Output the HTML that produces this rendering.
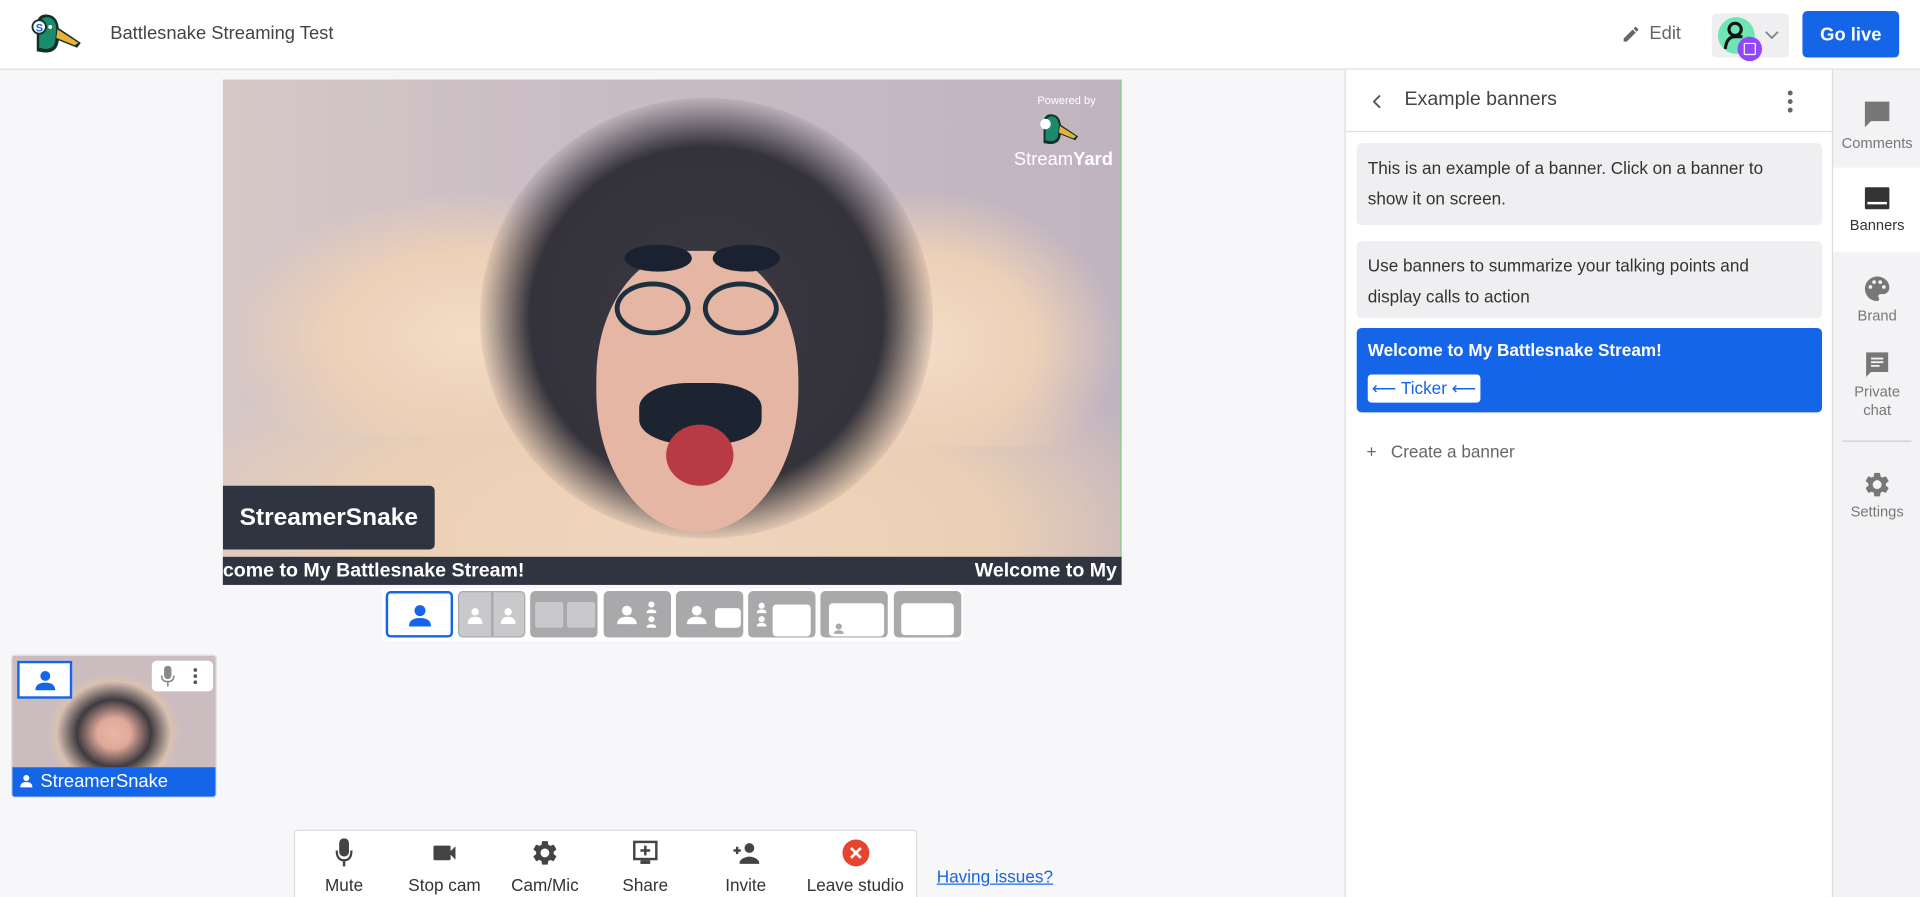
<!DOCTYPE html>
<html><head><meta charset="utf-8">
<style>
*{box-sizing:border-box;margin:0;padding:0}
html,body{width:1920px;height:897px;overflow:hidden;background:#f7f7f9;font-family:"Liberation Sans",sans-serif}
#s{width:1568px;height:733px;transform:scale(1.22449,1.2237);transform-origin:0 0;position:relative;background:#f7f7f9;color:#333}
.a{position:absolute}
.hdr{left:0;top:0;width:1568px;height:57px;background:#fff;border-bottom:1px solid #ddd}
.btn{display:flex;align-items:center;justify-content:center}
.card{background:#efeff1;border-radius:4px;font-size:14px;line-height:25px;color:#333;padding:8px 36px 8px 9px}
.lb{position:absolute;top:2px;width:55px;height:38px;border-radius:4px;background:#a9a9ab}
.sb{position:absolute;left:0;width:72px;text-align:center;font-size:12px;color:#777}
.ctl{position:absolute;top:6px;width:80px;text-align:center;font-size:14px;color:#333}
.ctl svg{display:block;margin:0 auto 6px}
</style></head><body>
<div id="s">
<div class="a hdr">
  <svg class="a" style="left:22px;top:10px" width="46" height="36" viewBox="0 0 46 36">
    <path d="M8 8 Q10 1 17 2 Q25 3 26 13 L44 25 L41 29 L26 23 Q25 33 15 33 L8 32 Z" fill="#12302a"/>
    <path d="M10 9 Q12 4 17 4 Q23 5 24 13 L23 24 Q22 30 15 30 L10 29 Z" fill="#1c8a6c"/>
    <path d="M25 14 L42 25 L39 27 L24 21 Z" fill="#e9b13a"/>
    <circle cx="19" cy="12" r="1.6" fill="#fff"/>
    <circle cx="10" cy="12" r="5.5" fill="#fff" stroke="#12302a" stroke-width="1.5"/>
    <text x="7.2" y="15.8" font-size="9" font-weight="bold" fill="#1565e8" font-family="Liberation Sans">S</text>
  </svg>
  <div class="a" style="left:90px;top:19px;font-size:15px;color:#444">Battlesnake Streaming Test</div>
  <svg class="a" style="left:1324px;top:20px" width="16" height="16" viewBox="0 0 24 24"><path d="M3 17.25V21h3.75L17.81 9.94l-3.75-3.75L3 17.25zM20.71 7.04a1 1 0 0 0 0-1.41l-2.34-2.34a1 1 0 0 0-1.41 0l-1.83 1.83 3.75 3.75 1.83-1.83z" fill="#666"/></svg>
  <div class="a" style="left:1347px;top:19px;font-size:15px;color:#666">Edit</div>
  <div class="a" style="left:1398px;top:11px;width:63px;height:36px;background:#efeff1;border-radius:4px"></div>
  <div class="a" style="left:1403px;top:14px;width:30px;height:30px;border-radius:50%;background:#6ee6b4"></div>
  <svg class="a" style="left:1406px;top:16px" width="22" height="26" viewBox="0 0 22 26"><circle cx="11" cy="8" r="5" fill="none" stroke="#111" stroke-width="2.5"/><path d="M3 24 Q4 14 11 14 L17 14" fill="none" stroke="#111" stroke-width="2.5"/></svg>
  <div class="a" style="left:1419px;top:30px;width:20px;height:20px;border-radius:50%;background:#9147ff"></div>
  <div class="a" style="left:1424px;top:35px;width:10px;height:10px;border:1.5px solid #fff;border-radius:1px"></div>
  <svg class="a" style="left:1441px;top:25px" width="12" height="8" viewBox="0 0 12 8"><path d="M1 1 L6 6 L11 1" fill="none" stroke="#888" stroke-width="1.5"/></svg>
  <div class="a btn" style="left:1472px;top:9px;width:79px;height:38px;background:#1565e8;border-radius:4px;color:#fff;font-weight:bold;font-size:15px">Go live</div>
</div>

<!-- video -->
<div class="a" style="left:182px;top:65px;width:734px;height:390px;overflow:hidden;background:linear-gradient(90deg,#d6c8c6,#c9bcc4 40%,#c0b4c0)">
  <div class="a" style="left:-40px;top:200px;width:814px;height:220px;background:radial-gradient(ellipse at 50% 80%,#f0d4bd 0,#ecd0b5 45%,transparent 75%)"></div>
  <div class="a" style="left:0;top:90px;width:290px;height:200px;background:radial-gradient(ellipse at 70% 60%,#f3dcc6 0,#edd0b8 40%,transparent 70%)"></div>
  <div class="a" style="left:500px;top:90px;width:234px;height:210px;background:radial-gradient(ellipse at 30% 60%,#f3dcc6 0,#edd0b8 40%,transparent 70%)"></div>
  <div class="a" style="left:210px;top:15px;width:370px;height:360px;border-radius:50%;background:radial-gradient(ellipse at 50% 50%,#3a3840 0,#34323a 55%,rgba(52,50,58,0) 72%)"></div>
  <div class="a" style="left:305px;top:140px;width:165px;height:230px;border-radius:45% 45% 50% 50%;background:#e6b6a4"></div>
  <div class="a" style="left:320px;top:165px;width:62px;height:44px;border-radius:50%;border:4px solid #1d3040"></div>
  <div class="a" style="left:392px;top:165px;width:62px;height:44px;border-radius:50%;border:4px solid #1d3040"></div>
  <div class="a" style="left:328px;top:135px;width:55px;height:22px;border-radius:50%;background:#1a2130"></div>
  <div class="a" style="left:400px;top:135px;width:55px;height:22px;border-radius:50%;background:#1a2130"></div>
  <div class="a" style="left:340px;top:248px;width:100px;height:50px;border-radius:40%;background:#1c2432"></div>
  <div class="a" style="left:362px;top:282px;width:55px;height:50px;border-radius:50%;background:#b83a45"></div>
  <div class="a" style="right:10px;top:12px;font-size:9px;color:#fff;text-align:center;width:70px">Powered by</div>
  <svg class="a" style="left:664px;top:24px" width="36" height="34" viewBox="0 0 46 36"><path d="M8 8 Q10 1 17 2 Q25 3 26 13 L44 25 L41 29 L26 23 Q25 33 15 33 L8 32 Z" fill="#12302a"/><path d="M10 9 Q12 4 17 4 Q23 5 24 13 L23 24 Q22 30 15 30 L10 29 Z" fill="#1c8a6c"/><path d="M25 14 L42 25 L39 27 L24 21 Z" fill="#e9b13a"/><circle cx="10" cy="12" r="5.5" fill="#fff"/></svg>
  <div class="a" style="left:646px;top:57px;font-size:15px;color:#fff">Stream<b>Yard</b></div>
  <div class="a" style="left:733px;top:0;width:1px;height:390px;background:#7ed07e"></div>
  <div class="a btn" style="left:0;top:332px;width:173px;height:52px;background:#2f3441;border-radius:0 4px 4px 0;color:#fff;font-weight:bold;font-size:20px">StreamerSnake</div>
</div>
<div class="a" style="left:182px;top:455px;width:734px;height:23px;background:#2f3441;color:#fff;font-weight:bold;font-size:16px;line-height:23px;overflow:hidden;white-space:nowrap">
  <span class="a" style="left:0">come to My Battlesnake Stream!</span><span class="a" style="left:614px">Welcome to My</span>
</div>

<!-- layouts -->
<div class="a" style="left:312px;top:481px;width:475px;height:43px;background:#fff;border-radius:3px">
  <div class="lb" style="left:3px;background:#fff;border:2px solid #1565e8"><svg class="a" style="left:16px;top:8px" width="20" height="20" viewBox="0 0 20 20"><circle cx="10" cy="6" r="4.5" fill="#1565e8"/><path d="M1 19 Q1 12 10 12 Q19 12 19 19Z" fill="#1565e8"/></svg></div>
  <div class="lb" style="left:62px;background:#c9c9cb;border:1px solid #a9a9ab"><div class="a" style="left:26px;top:0;width:2px;height:36px;background:#a9a9ab"></div><svg class="a" style="left:7px;top:12px" width="40" height="14"><circle cx="6" cy="4" r="3" fill="#fff"/><path d="M0 14 Q0 8 6 8 Q12 8 12 14Z" fill="#fff"/><circle cx="33" cy="4" r="3" fill="#fff"/><path d="M27 14 Q27 8 33 8 Q39 8 39 14Z" fill="#fff"/></svg></div>
  <div class="lb" style="left:121px"><div class="a" style="left:4px;top:9px;width:23px;height:21px;background:#c9c9cb;border-radius:2px"></div><div class="a" style="left:30px;top:9px;width:23px;height:21px;background:#c9c9cb;border-radius:2px"></div></div>
  <div class="lb" style="left:181px"><svg class="a" style="left:10px;top:8px" width="36" height="24"><circle cx="9" cy="8" r="4" fill="#fff"/><path d="M1 19 Q1 13 9 13 Q17 13 17 19Z" fill="#fff"/><circle cx="29" cy="3" r="2.5" fill="#fff"/><path d="M25 10 Q25 7 29 7 Q33 7 33 10Z" fill="#fff"/><circle cx="29" cy="15" r="2.5" fill="#fff"/><path d="M25 22 Q25 19 29 19 Q33 19 33 22Z" fill="#fff"/></svg></div>
  <div class="lb" style="left:240px"><svg class="a" style="left:8px;top:12px" width="18" height="16"><circle cx="9" cy="4" r="4" fill="#fff"/><path d="M1 15 Q1 9 9 9 Q17 9 17 15Z" fill="#fff"/></svg><div class="a" style="left:32px;top:14px;width:21px;height:16px;background:#fff;border-radius:3px"></div></div>
  <div class="lb" style="left:299px"><svg class="a" style="left:6px;top:9px" width="10" height="22"><circle cx="5" cy="3" r="2.5" fill="#fff"/><path d="M1 9 Q1 6 5 6 Q9 6 9 9Z" fill="#fff"/><circle cx="5" cy="14" r="2.5" fill="#fff"/><path d="M1 20 Q1 17 5 17 Q9 17 9 20Z" fill="#fff"/></svg><div class="a" style="left:20px;top:11px;width:31px;height:26px;background:#fff;border-radius:3px"></div></div>
  <div class="lb" style="left:358px"><div class="a" style="left:7px;top:10px;width:45px;height:27px;background:#fff;border-radius:3px"></div><svg class="a" style="left:10px;top:26px" width="10" height="10"><circle cx="5" cy="3" r="2.5" fill="#aaa"/><path d="M1 9 Q1 6 5 6 Q9 6 9 9Z" fill="#aaa"/></svg></div>
  <div class="lb" style="left:418px"><div class="a" style="left:6px;top:10px;width:43px;height:26px;background:#fff;border-radius:3px"></div></div>
</div>

<!-- thumbnail -->
<div class="a" style="left:9px;top:535px;width:168px;height:117px;border-radius:3px;overflow:hidden;border:1px solid #ddd;background:radial-gradient(ellipse 55px 50px at 50% 55%,#e8b8a6 0,#e0a898 25%,#3e3a40 55%,#d9c1b2 85%,#cbbcc0 100%)">
  <div class="a" style="left:4px;top:4px;width:45px;height:31px;background:#fff;border:2px solid #1565e8"><svg class="a" style="left:12px;top:5px" width="18" height="18" viewBox="0 0 20 20"><circle cx="10" cy="6" r="4.5" fill="#1565e8"/><path d="M1 19 Q1 12 10 12 Q19 12 19 19Z" fill="#1565e8"/></svg></div>
  <div class="a" style="left:114px;top:4px;width:50px;height:25px;background:#fff;border-radius:4px"><svg class="a" style="left:7px;top:4px" width="12" height="17" viewBox="0 0 12 17"><rect x="3" y="0" width="6" height="11" rx="3" fill="#888"/><path d="M1 8 Q1 13 6 13 Q11 13 11 8" fill="none" stroke="#888" stroke-width="1.3"/><rect x="5.4" y="13" width="1.3" height="4" fill="#888"/></svg><div class="a" style="left:34px;top:6px;width:3px;height:3px;border-radius:50%;background:#555;box-shadow:0 5px 0 #555,0 10px 0 #555"></div></div>
  <div class="a" style="left:0;top:91px;width:168px;height:26px;background:#1565e8;color:#fff;font-size:15px;line-height:24px;padding-left:23px">StreamerSnake</div>
  <svg class="a" style="left:6px;top:97px" width="11" height="11" viewBox="0 0 20 20"><circle cx="10" cy="5" r="4.5" fill="#fff"/><path d="M1 19 Q1 11 10 11 Q19 11 19 19Z" fill="#fff"/></svg>
</div>

<!-- control bar -->
<div class="a" style="left:240px;top:678px;width:509px;height:60px;background:#fff;border:1px solid #ddd;border-radius:3px">
  <div class="ctl" style="left:0"><svg width="14" height="24" viewBox="0 0 14 24"><rect x="3" y="0" width="8" height="15" rx="4" fill="#444"/><path d="M1 10 Q1 18 7 18 Q13 18 13 10" fill="none" stroke="#444" stroke-width="1.8"/><rect x="6" y="18" width="2" height="5" fill="#444"/></svg>Mute</div>
  <div class="ctl" style="left:82px"><svg width="24" height="24" viewBox="0 0 24 24"><path d="M17 10.5V7a1 1 0 0 0-1-1H4a1 1 0 0 0-1 1v10a1 1 0 0 0 1 1h12a1 1 0 0 0 1-1v-3.5l4 4v-11l-4 4z" fill="#444"/></svg>Stop cam</div>
  <div class="ctl" style="left:164px"><svg width="24" height="24" viewBox="0 0 24 24"><path d="M19.14 12.94c.04-.3.06-.61.06-.94 0-.32-.02-.64-.07-.94l2.03-1.58a.49.49 0 0 0 .12-.61l-1.920-3.32a.49.49 0 0 0-.59-.22l-2.39.96c-.5-.38-1.03-.7-1.62-.94l-.36-2.54a.48.48 0 0 0-.48-.41h-3.84a.48.48 0 0 0-.47.41l-.36 2.54c-.59.24-1.13.57-1.62.94l-2.39-.96a.48.48 0 0 0-.59.22L2.74 8.87a.47.47 0 0 0 .12.61l2.03 1.58c-.05.3-.09.63-.09.94s.02.64.07.94l-2.03 1.58a.49.49 0 0 0-.12.61l1.92 3.32c.12.22.37.29.59.22l2.39-.96c.5.38 1.03.7 1.62.94l.36 2.54c.05.24.24.41.48.41h3.84c.24 0 .44-.17.47-.41l.36-2.54c.59-.24 1.13-.56 1.62-.94l2.39.96c.22.08.47 0 .59-.22l1.92-3.32a.47.47 0 0 0-.12-.61l-2.01-1.58zM12 15.6A3.6 3.6 0 1 1 12 8.4a3.6 3.6 0 0 1 0 7.2z" fill="#444"/></svg>Cam/Mic</div>
  <div class="ctl" style="left:246px"><svg width="24" height="24" viewBox="0 0 24 24"><rect x="3" y="3" width="18" height="14" fill="none" stroke="#444" stroke-width="2"/><path d="M12 6v8M8 10h8" stroke="#444" stroke-width="2"/><rect x="8" y="18" width="8" height="3" fill="#444"/></svg>Share</div>
  <div class="ctl" style="left:328px"><svg width="24" height="24" viewBox="0 0 24 24"><circle cx="15" cy="8" r="4" fill="#444"/><path d="M7 20c0-3 5-5 8-5s8 2 8 5v1H7z" fill="#444"/><path d="M5 7v6M2 10h6" stroke="#444" stroke-width="2"/></svg>Invite</div>
  <div class="ctl" style="left:410px;width:95px"><svg width="24" height="24" viewBox="0 0 24 24"><circle cx="12" cy="12" r="11" fill="#e5452f"/><path d="M8 8l8 8M16 8l-8 8" stroke="#fff" stroke-width="2.2"/></svg>Leave studio</div>
</div>
<div class="a" style="left:765px;top:708px;font-size:14px;color:#1565e8;text-decoration:underline">Having issues?</div>

<!-- right panel -->
<div class="a" style="left:1098px;top:57px;width:398px;height:676px;background:#fff;border-left:1px solid #ddd">
  <div class="a" style="left:0;top:0;width:397px;height:51px;border-bottom:1px solid #ddd">
    <svg class="a" style="left:22px;top:20px" width="8" height="12"><path d="M6 1 L1 6 L6 11" fill="none" stroke="#555" stroke-width="1.5"/></svg>
    <div class="a" style="left:48px;top:16px;font-size:16px;color:#444">Example banners</div>
    <div class="a" style="left:361px;top:17px;width:4px;height:4px;border-radius:50%;background:#666;box-shadow:0 7px 0 #666,0 14px 0 #666"></div>
  </div>
  <div class="a card" style="left:9px;top:60px;width:380px;height:67px">This is an example of a banner. Click on a banner to show it on screen.</div>
  <div class="a card" style="left:9px;top:140px;width:380px;height:63px">Use banners to summarize your talking points and display calls to action</div>
  <div class="a" style="left:9px;top:211px;width:380px;height:69px;background:#1565e8;border-radius:4px;color:#fff;font-size:14px;font-weight:bold;padding:10px 9px">Welcome to My Battlesnake Stream!
    <div class="a" style="left:9px;top:38px;width:92px;height:23px;background:#fff;border-radius:3px;color:#1565e8;font-weight:normal;font-size:14px;line-height:23px;text-align:center">⟵ Ticker ⟵</div>
  </div>
  <div class="a" style="left:17px;top:304px;font-size:14px;color:#666">+&nbsp;&nbsp; Create a banner</div>
</div>

<!-- sidebar -->
<div class="a" style="left:1496px;top:57px;width:72px;height:676px;background:#f3f3f5;border-left:1px solid #ddd">
  <div class="sb" style="top:24px"><svg width="24" height="26" viewBox="0 0 24 26"><path d="M2 2h20v16H7l-5 5z" fill="#777"/></svg><div>Comments</div></div>
  <div class="sb" style="top:80px;height:69px;background:#fff;padding-top:15px;color:#333"><svg width="24" height="22" viewBox="0 0 24 22"><rect x="2" y="1" width="20" height="18" rx="1" fill="#333"/><rect x="4" y="13" width="16" height="2" fill="#fff"/></svg><div>Banners</div></div>
  <div class="sb" style="top:167px"><svg width="24" height="24" viewBox="0 0 24 24"><path d="M12 2A10 10 0 0 0 12 22c1 0 1.7-.8 1.7-1.7 0-.4-.2-.8-.4-1.1-.3-.3-.4-.7-.4-1.1 0-.9.8-1.7 1.7-1.7h2A5.5 5.5 0 0 0 22 11C22 6 17.5 2 12 2zM6.5 12a1.5 1.5 0 1 1 0-3 1.5 1.5 0 0 1 0 3zm3-4a1.5 1.5 0 1 1 0-3 1.5 1.5 0 0 1 0 3zm5 0a1.5 1.5 0 1 1 0-3 1.5 1.5 0 0 1 0 3zm3 4a1.5 1.5 0 1 1 0-3 1.5 1.5 0 0 1 0 3z" fill="#777"/></svg><div>Brand</div></div>
  <div class="sb" style="top:229px"><svg width="24" height="24" viewBox="0 0 24 24"><path d="M3 2h18v16H7l-4 4z" fill="#777"/><path d="M7 7h10M7 10h10M7 13h7" stroke="#f3f3f5" stroke-width="1.5"/></svg><div style="line-height:15px">Private<br>chat</div></div>
  <div class="a" style="left:8px;top:303px;width:56px;height:1px;background:#ccc"></div>
  <div class="sb" style="top:327px"><svg width="24" height="24" viewBox="0 0 24 24"><path d="M19.14 12.94c.04-.3.06-.61.06-.94 0-.32-.02-.64-.07-.94l2.03-1.58a.49.49 0 0 0 .12-.61l-1.92-3.32a.49.49 0 0 0-.59-.22l-2.39.96c-.5-.38-1.03-.7-1.62-.94l-.36-2.54a.48.48 0 0 0-.48-.41h-3.84a.48.48 0 0 0-.47.41l-.36 2.54c-.59.24-1.13.57-1.62.94l-2.39-.96a.48.48 0 0 0-.59.22L2.74 8.87a.47.47 0 0 0 .12.61l2.03 1.58c-.05.3-.09.63-.09.94s.02.64.07.94l-2.03 1.58a.49.49 0 0 0-.12.61l1.92 3.32c.12.22.37.29.59.22l2.39-.96c.5.38 1.03.7 1.62.94l.36 2.54c.05.24.24.41.48.41h3.84c.24 0 .44-.17.47-.41l.36-2.54c.59-.24 1.13-.56 1.62-.94l2.39.96c.22.08.47 0 .59-.22l1.92-3.32a.47.47 0 0 0-.12-.61l-2.01-1.58zM12 15.6A3.6 3.6 0 1 1 12 8.4a3.6 3.6 0 0 1 0 7.2z" fill="#777"/></svg><div>Settings</div></div>
</div>
</div>
</body></html>
